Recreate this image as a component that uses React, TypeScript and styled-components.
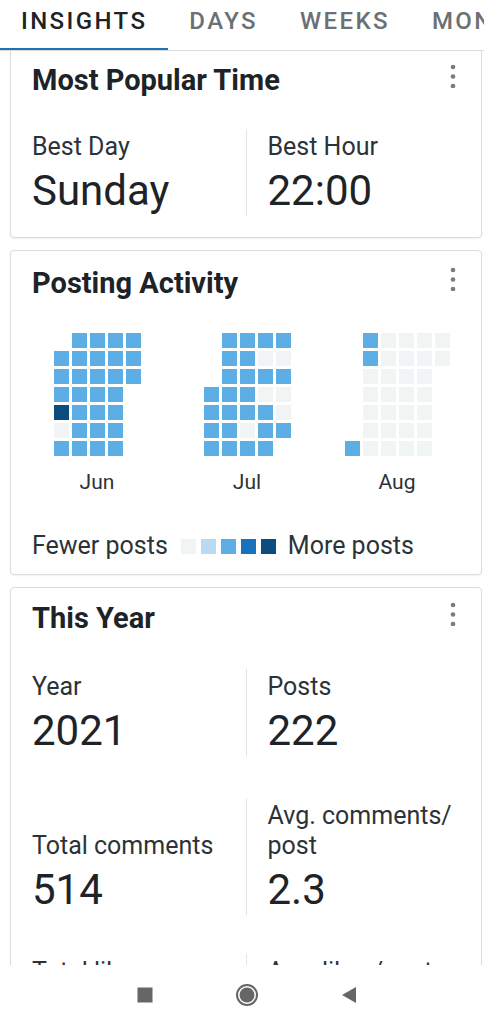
import React from 'react';
import styled, { createGlobalStyle } from 'styled-components';

const GlobalStyle = createGlobalStyle`
  html, body {
    margin: 0;
    padding: 0;
    background: #fff;
  }
  body {
    font-family: Roboto, "Noto Sans", "Liberation Sans", sans-serif;
    color: #2c3338;
  }
`;

type Level = ' ' | '0' | '1' | '2' | '3' | '4';

const levelColors: Record<string, string> = {
  '0': '#f1f4f5',
  '1': '#b8daf3',
  '2': '#5eaee6',
  '3': '#1872bd',
  '4': '#0c4d7e',
};

// one string per weekday (Mon..Sun), one char per week column
const months: { name: string; rows: string[] }[] = [
  {
    name: 'Jun',
    rows: [' 2222', '22222', '22222', '2222 ', '4222 ', '0222 ', '2222 '],
  },
  {
    name: 'Jul',
    rows: [' 2222', ' 2200', ' 2222', '22200', '22220', '22022', '2222 '],
  },
  {
    name: 'Aug',
    rows: [' 20000', ' 20000', ' 0000 ', ' 0000 ', ' 0000 ', ' 0000 ', '20000 '],
  },
];

const tabs = ['Insights', 'Days', 'Weeks', 'Months', 'Years'];

const Screen = styled.div`
  height: 1024px;
  display: flex;
  flex-direction: column;
  overflow: hidden;
  background: #fff;
`;

const TabBar = styled.div`
  position: relative;
  z-index: 2;
  height: 50px;
  flex-shrink: 0;
  display: flex;
  background: #fff;
  border-bottom: 1px solid #dcdcde;
  white-space: nowrap;
  overflow: hidden;
`;

const Tab = styled.div<{ $active?: boolean }>`
  flex-shrink: 0;
  padding: 0 21px 7px;
  display: flex;
  align-items: center;
  font-size: 24px;
  font-weight: 500;
  letter-spacing: 2.4px;
  text-transform: uppercase;
  color: ${(p) => (p.$active ? '#1d2327' : '#6c7074')};
  border-bottom: 3px solid ${(p) => (p.$active ? '#2271b1' : 'transparent')};
  margin-bottom: -1px;
`;

const Content = styled.div`
  flex: 1;
  overflow: hidden;
  display: flex;
  flex-direction: column;
  gap: 12px;
  padding: 0 2px 0 10px;
`;

const Card = styled.section<{ $first?: boolean; $top?: number; $bottom?: number }>`
  flex-shrink: 0;
  background: #fff;
  border: 1px solid #dcdcde;
  border-radius: 4px;
  box-shadow: 0 1px 2px rgba(0, 0, 0, 0.06);
  padding: ${(p) => p.$top ?? 15}px 22px ${(p) => p.$bottom ?? 21}px 21px;
  margin-top: ${(p) => (p.$first ? '-4px' : '0')};
`;

const CardHeader = styled.div`
  display: flex;
  justify-content: space-between;
  align-items: flex-start;
`;

const CardTitle = styled.h2`
  margin: 0;
  font-size: 29px;
  line-height: 34px;
  font-weight: 700;
  color: #1d2327;
`;

const KebabButton = styled.div`
  margin-top: 1px;
  margin-right: 2px;
  display: flex;
`;

const StatRow = styled.div<{ $top: number }>`
  display: grid;
  grid-template-columns: 1fr 1fr;
  margin-top: ${(p) => p.$top}px;
`;

const StatItem = styled.div`
  display: flex;
  flex-direction: column;
  justify-content: flex-end;
  padding-top: 3px;
  & + & {
    border-left: 1px solid #e4e4e6;
    padding-left: 21px;
  }
`;

const StatLabel = styled.div`
  font-size: 25px;
  line-height: 30px;
  color: #2c3338;
`;

const StatValue = styled.div`
  margin-top: 4px;
  font-size: 42px;
  line-height: 50px;
  color: #1d2327;
`;

const Heatmap = styled.div`
  display: grid;
  grid-template-columns: repeat(3, 150px);
  margin: 33px 0 0 -10px;
`;

const Month = styled.div`
  display: flex;
  flex-direction: column;
  align-items: center;
`;

const DayGrid = styled.div<{ $cols: number }>`
  display: grid;
  grid-template-columns: repeat(${(p) => p.$cols}, 15px);
  grid-auto-rows: 15px;
  gap: 3px 3px;
`;

const Day = styled.div<{ $level: Level }>`
  background: ${(p) => (p.$level === ' ' ? 'transparent' : levelColors[p.$level])};
`;

const MonthName = styled.div`
  margin-top: 12px;
  font-size: 21px;
  line-height: 28px;
  color: #2c3338;
`;

const Legend = styled.div`
  margin-top: 36px;
  display: flex;
  align-items: center;
  font-size: 25px;
  line-height: 28px;
  color: #2c3338;
  white-space: nowrap;
`;

const LegendScale = styled.div`
  display: flex;
  gap: 5px;
  margin: 0 12px 0 13px;
`;

const Swatch = styled.div<{ $color: string }>`
  width: 15px;
  height: 15px;
  background: ${(p) => p.$color};
`;

const NavBar = styled.nav`
  position: relative;
  z-index: 2;
  height: 59px;
  flex-shrink: 0;
  background: #fff;
  display: flex;
  justify-content: center;
  align-items: center;
  padding-left: 10px;
`;

const NavItem = styled.div`
  width: 102px;
  display: flex;
  justify-content: center;
  align-items: center;
`;

const Kebab = () => (
  <KebabButton>
    <svg width="8" height="24" viewBox="0 0 8 24">
      <circle cx="4" cy="3" r="2.3" fill="#787c82" />
      <circle cx="4" cy="12.5" r="2.3" fill="#787c82" />
      <circle cx="4" cy="22" r="2.3" fill="#787c82" />
    </svg>
  </KebabButton>
);

const Stat = ({ label, value }: { label: string; value: string }) => (
  <StatItem>
    <StatLabel>{label}</StatLabel>
    <StatValue>{value}</StatValue>
  </StatItem>
);

export default function App() {
  return (
    <>
      <GlobalStyle />
      <Screen>
        <TabBar>
          {tabs.map((t, i) => (
            <Tab key={t} $active={i === 0}>
              {t}
            </Tab>
          ))}
        </TabBar>

        <Content>
          <Card $first>
            <CardHeader>
              <CardTitle>Most Popular Time</CardTitle>
              <Kebab />
            </CardHeader>
            <StatRow $top={32}>
              <Stat label="Best Day" value="Sunday" />
              <Stat label="Best Hour" value="22:00" />
            </StatRow>
          </Card>

          <Card $bottom={14}>
            <CardHeader>
              <CardTitle>Posting Activity</CardTitle>
              <Kebab />
            </CardHeader>
            <Heatmap>
              {months.map((m) => (
                <Month key={m.name}>
                  <DayGrid $cols={m.rows[0].length}>
                    {m.rows.map((row, r) =>
                      row.split('').map((c, ci) => <Day key={`${r}-${ci}`} $level={c as Level} />)
                    )}
                  </DayGrid>
                  <MonthName>{m.name}</MonthName>
                </Month>
              ))}
            </Heatmap>
            <Legend>
              Fewer posts
              <LegendScale>
                {['0', '1', '2', '3', '4'].map((l) => (
                  <Swatch key={l} $color={levelColors[l]} />
                ))}
              </LegendScale>
              More posts
            </Legend>
          </Card>

          <Card $top={13}>
            <CardHeader>
              <CardTitle>This Year</CardTitle>
              <Kebab />
            </CardHeader>
            <StatRow $top={34}>
              <Stat label="Year" value="2021" />
              <Stat label="Posts" value="222" />
            </StatRow>
            <StatRow $top={42}>
              <Stat label="Total comments" value="514" />
              <Stat label="Avg. comments/ post" value="2.3" />
            </StatRow>
            <StatRow $top={39}>
              <Stat label="Total likes" value="1,308" />
              <Stat label="Avg. likes/post" value="5.9" />
            </StatRow>
          </Card>
        </Content>

        <NavBar>
          <NavItem>
            <svg width="16" height="16" viewBox="0 0 16 16">
              <rect x="0.5" y="0.5" width="15" height="15" fill="#666" />
            </svg>
          </NavItem>
          <NavItem>
            <svg width="24" height="24" viewBox="0 0 24 24">
              <circle cx="12" cy="12" r="10" fill="none" stroke="#666" strokeWidth="2" />
              <circle cx="12" cy="12" r="7.5" fill="#666" />
            </svg>
          </NavItem>
          <NavItem>
            <svg width="16" height="18" viewBox="0 0 16 18">
              <polygon points="15,1 15,17 1,9" fill="#666" />
            </svg>
          </NavItem>
        </NavBar>
      </Screen>
    </>
  );
}
